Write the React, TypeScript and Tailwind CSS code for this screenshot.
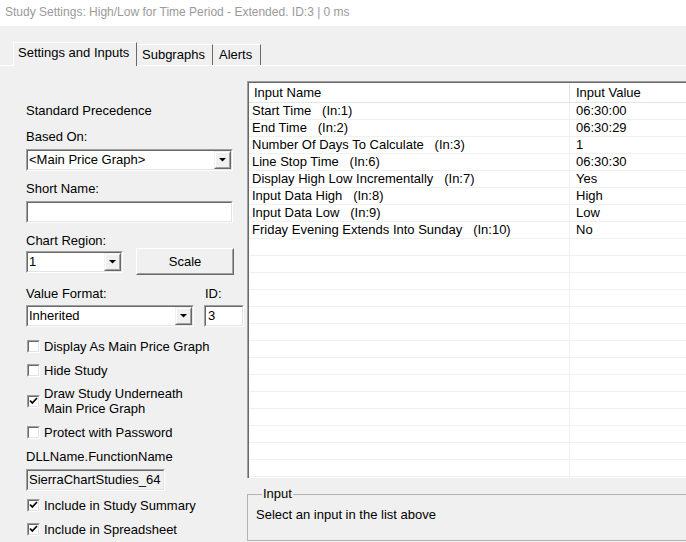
import React from "react";

const Sunken = ({ className, inner, children }: { className: string; inner?: string; children?: React.ReactNode }) => (
  <div className={`border border-t-[#a0a0a0] border-l-[#a0a0a0] border-r-white border-b-white ${className}`}>
    <div className={`h-full border border-t-[#696969] border-l-[#696969] border-r-[#e3e3e3] border-b-[#e3e3e3] ${inner ?? ""}`}>
      {children}
    </div>
  </div>
);

const DropBtn = () => (
  <div className="w-[17px] h-full shrink-0 border border-t-[#f0f0f0] border-l-[#f0f0f0] border-r-[#696969] border-b-[#696969] bg-[#f0f0f0]">
    <div className="h-full border border-t-white border-l-white border-r-[#a0a0a0] border-b-[#a0a0a0] flex items-center justify-center">
      <svg width="7" height="4" viewBox="0 0 7 4">
        <polygon points="0,0 7,0 3.5,3.5" fill="#000" />
      </svg>
    </div>
  </div>
);

const Select = ({ w, text }: { w: string; text: string }) => (
  <Sunken className={`${w} h-[22px] bg-white`} inner="flex items-stretch">
    <div className="flex-1 pl-[1px] leading-[18px] whitespace-nowrap overflow-hidden">{text}</div>
    <DropBtn />
  </Sunken>
);

const Check = ({ checked }: { checked?: boolean }) => (
  <div className="w-[13px] h-[13px] shrink-0 border border-t-[#a0a0a0] border-l-[#a0a0a0] border-r-white border-b-white">
    <div className="w-full h-full border border-t-[#696969] border-l-[#696969] border-r-[#e3e3e3] border-b-[#e3e3e3] bg-white flex items-center justify-center">
      {checked && (
        <svg width="9" height="9" viewBox="0 0 9 9">
          <path d="M1 3.5 L3.3 6 L8 1" stroke="#000" strokeWidth="1.7" fill="none" />
        </svg>
      )}
    </div>
  </div>
);

const CheckRow = ({ checked, children, className }: { checked?: boolean; children: React.ReactNode; className: string }) => (
  <div className={`flex items-center gap-[4px] pl-[1px] ${className}`}>
    <Check checked={checked} />
    <div className="leading-[15px]">{children}</div>
  </div>
);

const rows: [string, string][] = [
  ["Start Time   (In:1)", "06:30:00"],
  ["End Time   (In:2)", "06:30:29"],
  ["Number Of Days To Calculate   (In:3)", "1"],
  ["Line Stop Time   (In:6)", "06:30:30"],
  ["Display High Low Incrementally   (In:7)", "Yes"],
  ["Input Data High   (In:8)", "High"],
  ["Input Data Low   (In:9)", "Low"],
  ["Friday Evening Extends Into Sunday   (In:10)", "No"],
];

export default function App() {
  const allRows = [...rows, ...Array.from({ length: 16 }, () => ["", ""] as [string, string])];
  return (
    <div className="w-[686px] h-[542px] overflow-hidden bg-[#f0f0f0] text-[13px] text-black font-['Liberation_Sans',Arial,sans-serif]">
      {/* Title bar */}
      <div className="h-[26px] bg-white pl-[5px] pt-[4px] text-[12px] leading-[16px] text-[#9a9a9a] whitespace-nowrap">
        Study Settings: High/Low for Time Period - Extended. ID:3 | 0 ms
      </div>

      {/* Tabs */}
      <div className="h-[40px] pl-[13px] pt-[16px] flex items-end border-b border-white">
        <div className="w-[124px] h-[24px] -mb-[1px] bg-[#f0f0f0] border-l border-t border-white border-r border-r-[#696969] pl-[4px] pt-[2px] leading-[16px] whitespace-nowrap">
          Settings and Inputs
        </div>
        <div className="w-[76px] h-[21px] border-t border-white border-r border-r-[#696969] pl-[5px] pt-[2px] leading-[16px] whitespace-nowrap">
          Subgraphs
        </div>
        <div className="w-[48px] h-[21px] border-t border-white border-r border-r-[#696969] pl-[6px] pt-[2px] leading-[16px] whitespace-nowrap">
          Alerts
        </div>
      </div>

      {/* Content */}
      <div className="flex h-[476px]">
        {/* Left column */}
        <div className="w-[247px] shrink-0 pl-[26px] flex flex-col">
          <div className="mt-[37px] leading-[16px]">Standard Precedence</div>
          <div className="mt-[10px] leading-[16px]">Based On:</div>
          <div className="mt-[4px]">
            <Select w="w-[207px]" text="<Main Price Graph>" />
          </div>
          <div className="mt-[10px] leading-[16px]">Short Name:</div>
          <Sunken className="mt-[4px] w-[207px] h-[22px] bg-white" />
          <div className="mt-[10px] leading-[16px]">Chart Region:</div>
          <div className="flex items-start h-[27px] -mt-[1px]">
            <div className="mt-[3px]">
              <Select w="w-[97px]" text="1" />
            </div>
            <div className="ml-[13px] w-[98px] h-[27px] border border-t-white border-l-white border-r-[#696969] border-b-[#696969]">
              <div className="h-full border border-t-[#f0f0f0] border-l-[#f0f0f0] border-r-[#a0a0a0] border-b-[#a0a0a0] flex items-center justify-center">
                Scale
              </div>
            </div>
          </div>
          <div className="mt-[11px] flex leading-[16px]">
            <div className="w-[179px]">Value Format:</div>
            <div>ID:</div>
          </div>
          <div className="mt-[3px] flex">
            <Select w="w-[168px]" text="Inherited" />
            <Sunken className="ml-[10px] w-[40px] h-[22px] bg-white" inner="pl-[2px] leading-[18px]">
              3
            </Sunken>
          </div>
          <CheckRow className="mt-[12px]">Display As Main Price Graph</CheckRow>
          <CheckRow className="mt-[9px]">Hide Study</CheckRow>
          <CheckRow className="mt-[8px]" checked>
            Draw Study Underneath
            <br />
            Main Price Graph
          </CheckRow>
          <CheckRow className="mt-[9px]">Protect with Password</CheckRow>
          <div className="mt-[9px] leading-[16px]">DLLName.FunctionName</div>
          <Sunken className="mt-[4px] w-[139px] h-[22px] bg-[#f0f0f0]" inner="pl-[1px] leading-[18px] whitespace-nowrap overflow-hidden">
            SierraChartStudies_64
          </Sunken>
          <CheckRow className="mt-[7px]" checked>
            Include in Study Summary
          </CheckRow>
          <CheckRow className="mt-[9px]" checked>
            Include in Spreadsheet
          </CheckRow>
        </div>

        {/* Right column */}
        <div className="flex-1 flex flex-col min-w-0">
          <div className="mt-[15px] w-[470px] h-[397px] bg-white border-t border-l border-[#a0a0a0] overflow-hidden">
            <div className="h-full border-t border-l border-[#696969] overflow-hidden">
              <div className="h-[20px] flex border-b border-[#e5e5e5] leading-[19px]">
                <div className="w-[321px] shrink-0 border-r border-[#e5e5e5] pl-[5px]">Input Name</div>
                <div className="pl-[6px]">Input Value</div>
              </div>
              {allRows.map(([n, v], i) => (
                <div key={i} className="h-[17px] flex border-b border-[#f0f0f0] leading-[16px]">
                  <div className="w-[321px] shrink-0 border-r border-[#f0f0f0] pl-[3px] whitespace-pre">{n}</div>
                  <div className="pl-[6px] whitespace-pre">{v}</div>
                </div>
              ))}
            </div>
          </div>
          <fieldset className="mt-[8px] w-[470px] h-[55px] border border-[#b4b4b4] pl-[8px]">
            <legend className="ml-[6px] px-[1px] leading-[16px]">Input</legend>
            <div className="pt-[5px] leading-[16px]">Select an input in the list above</div>
          </fieldset>
        </div>
      </div>
    </div>
  );
}
